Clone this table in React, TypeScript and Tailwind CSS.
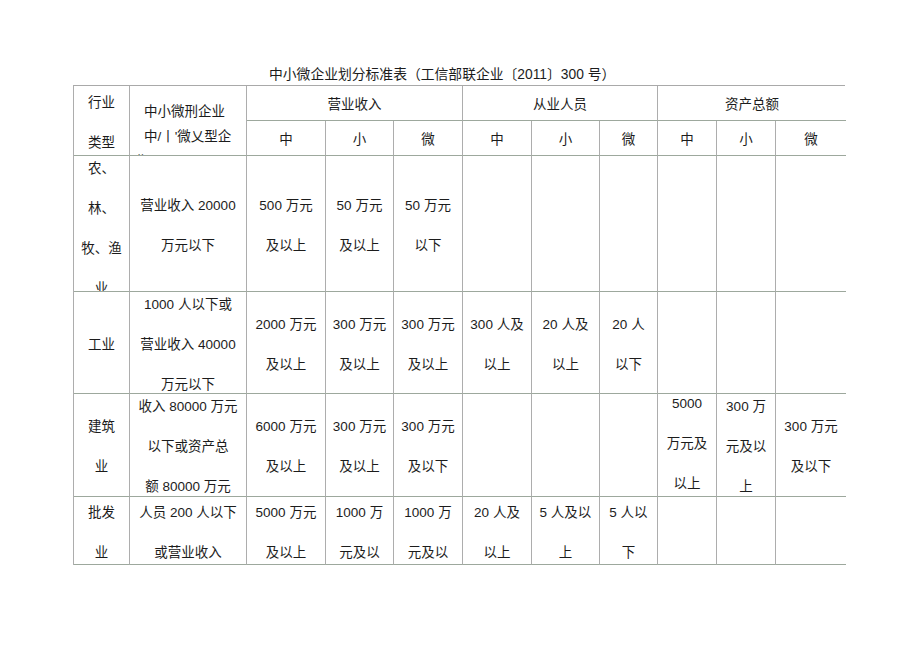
import React from 'react';

type CellProps = {
  lines?: string[];
  span?: string;
  last?: boolean;
  extra?: string;
};

const FONT = '"Liberation Sans", "Noto Sans CJK SC", sans-serif';

function Cell({ lines = [], span = '', last = false, extra = '' }: CellProps) {
  return (
    <div
      className={`${span} flex flex-col items-center justify-center overflow-hidden border-b border-[#9da89d] ${
        last ? '' : 'border-r border-r-[#adadad]'
      }`}
    >
      <div className={`text-center leading-[40px] whitespace-nowrap ${extra}`}>
        {lines.map((l, i) => (
          <div key={i}>{l}</div>
        ))}
      </div>
    </div>
  );
}

const rows: string[][][] = [
  [
    ['农、', '林、', '牧、渔', '业'],
    ['营业收入 20000', '万元以下'],
    ['500 万元', '及以上'],
    ['50 万元', '及以上'],
    ['50 万元', '以下'],
    [], [], [], [], [], [],
  ],
  [
    ['工业'],
    ['1000 人以下或', '营业收入 40000', '万元以下'],
    ['2000 万元', '及以上'],
    ['300 万元', '及以上'],
    ['300 万元', '及以上'],
    ['300 人及', '以上'],
    ['20 人及', '以上'],
    ['20 人', '以下'],
    [], [], [],
  ],
  [
    ['建筑', '业'],
    ['收入 80000 万元', '以下或资产总', '额 80000 万元'],
    ['6000 万元', '及以上'],
    ['300 万元', '及以上'],
    ['300 万元', '及以下'],
    [], [], [],
    ['5000', '万元及', '以上'],
    ['300 万', '元及以', '上'],
    ['300 万元', '及以下'],
  ],
  [
    ['批发', '业'],
    ['人员 200 人以下', '或营业收入'],
    ['5000 万元', '及以上'],
    ['1000 万', '元及以'],
    ['1000 万', '元及以'],
    ['20 人及', '以上'],
    ['5 人及以', '上'],
    ['5 人以', '下'],
    [], [], [],
  ],
];

export default function App() {
  return (
    <div
      className="w-[920px] h-[650px] bg-white text-[#1c1c1c] text-[13.5px] pt-[65px]"
      style={{ fontFamily: FONT }}
    >
      <div className="h-[20px] leading-[20px] pl-[269px] whitespace-nowrap text-[13.8px]">
        中小微企业划分标准表（工信部联企业〔2011〕300 号）
      </div>

      <div className="ml-[73px] w-[772px] grid grid-cols-[56px_117px_79px_68px_69px_69px_68px_58px_59px_59px_70px] grid-rows-[35px_35px_136px_102px_103px_68px] border-t border-t-[#a9a9a9] border-l border-l-[#adadad]">
        <Cell span="row-span-2" lines={['行业', '类型']} extra="leading-[39px] translate-y-[2px]" />
        <div className="row-span-2 overflow-hidden border-b border-[#9da89d] border-r border-r-[#adadad] pt-[13px] pl-[4px] leading-[25px] whitespace-nowrap">
          <div className="pl-[10px]">中小微刑企业</div>
          <div className="pl-[10px]">中/丨'微乂型企</div>
          <div>业</div>
        </div>
        <Cell span="col-span-3" lines={['营业收入']} extra="leading-[20px] translate-y-[2px]" />
        <Cell span="col-span-3" lines={['从业人员']} extra="leading-[20px] translate-y-[2px]" />
        <Cell span="col-span-3" last lines={['资产总额']} extra="leading-[20px] translate-y-[2px]" />

        {['中', '小', '微', '中', '小', '微', '中', '小', '微'].map((t, i) => (
          <Cell key={i} lines={[t]} last={i === 8} extra="leading-[20px] translate-y-[2px]" />
        ))}

        {rows.map((r, ri) =>
          r.map((lines, ci) => (
            <Cell
              key={`${ri}-${ci}`}
              lines={lines}
              last={ci === 10}
              extra={
                ri === 0 && ci === 0
                  ? 'translate-y-[5px]'
                  : ri === 2 && ci === 8
                  ? 'translate-y-[-1px]'
                  : 'translate-y-[2px]'
              }
            />
          ))
        )}
      </div>
    </div>
  );
}
